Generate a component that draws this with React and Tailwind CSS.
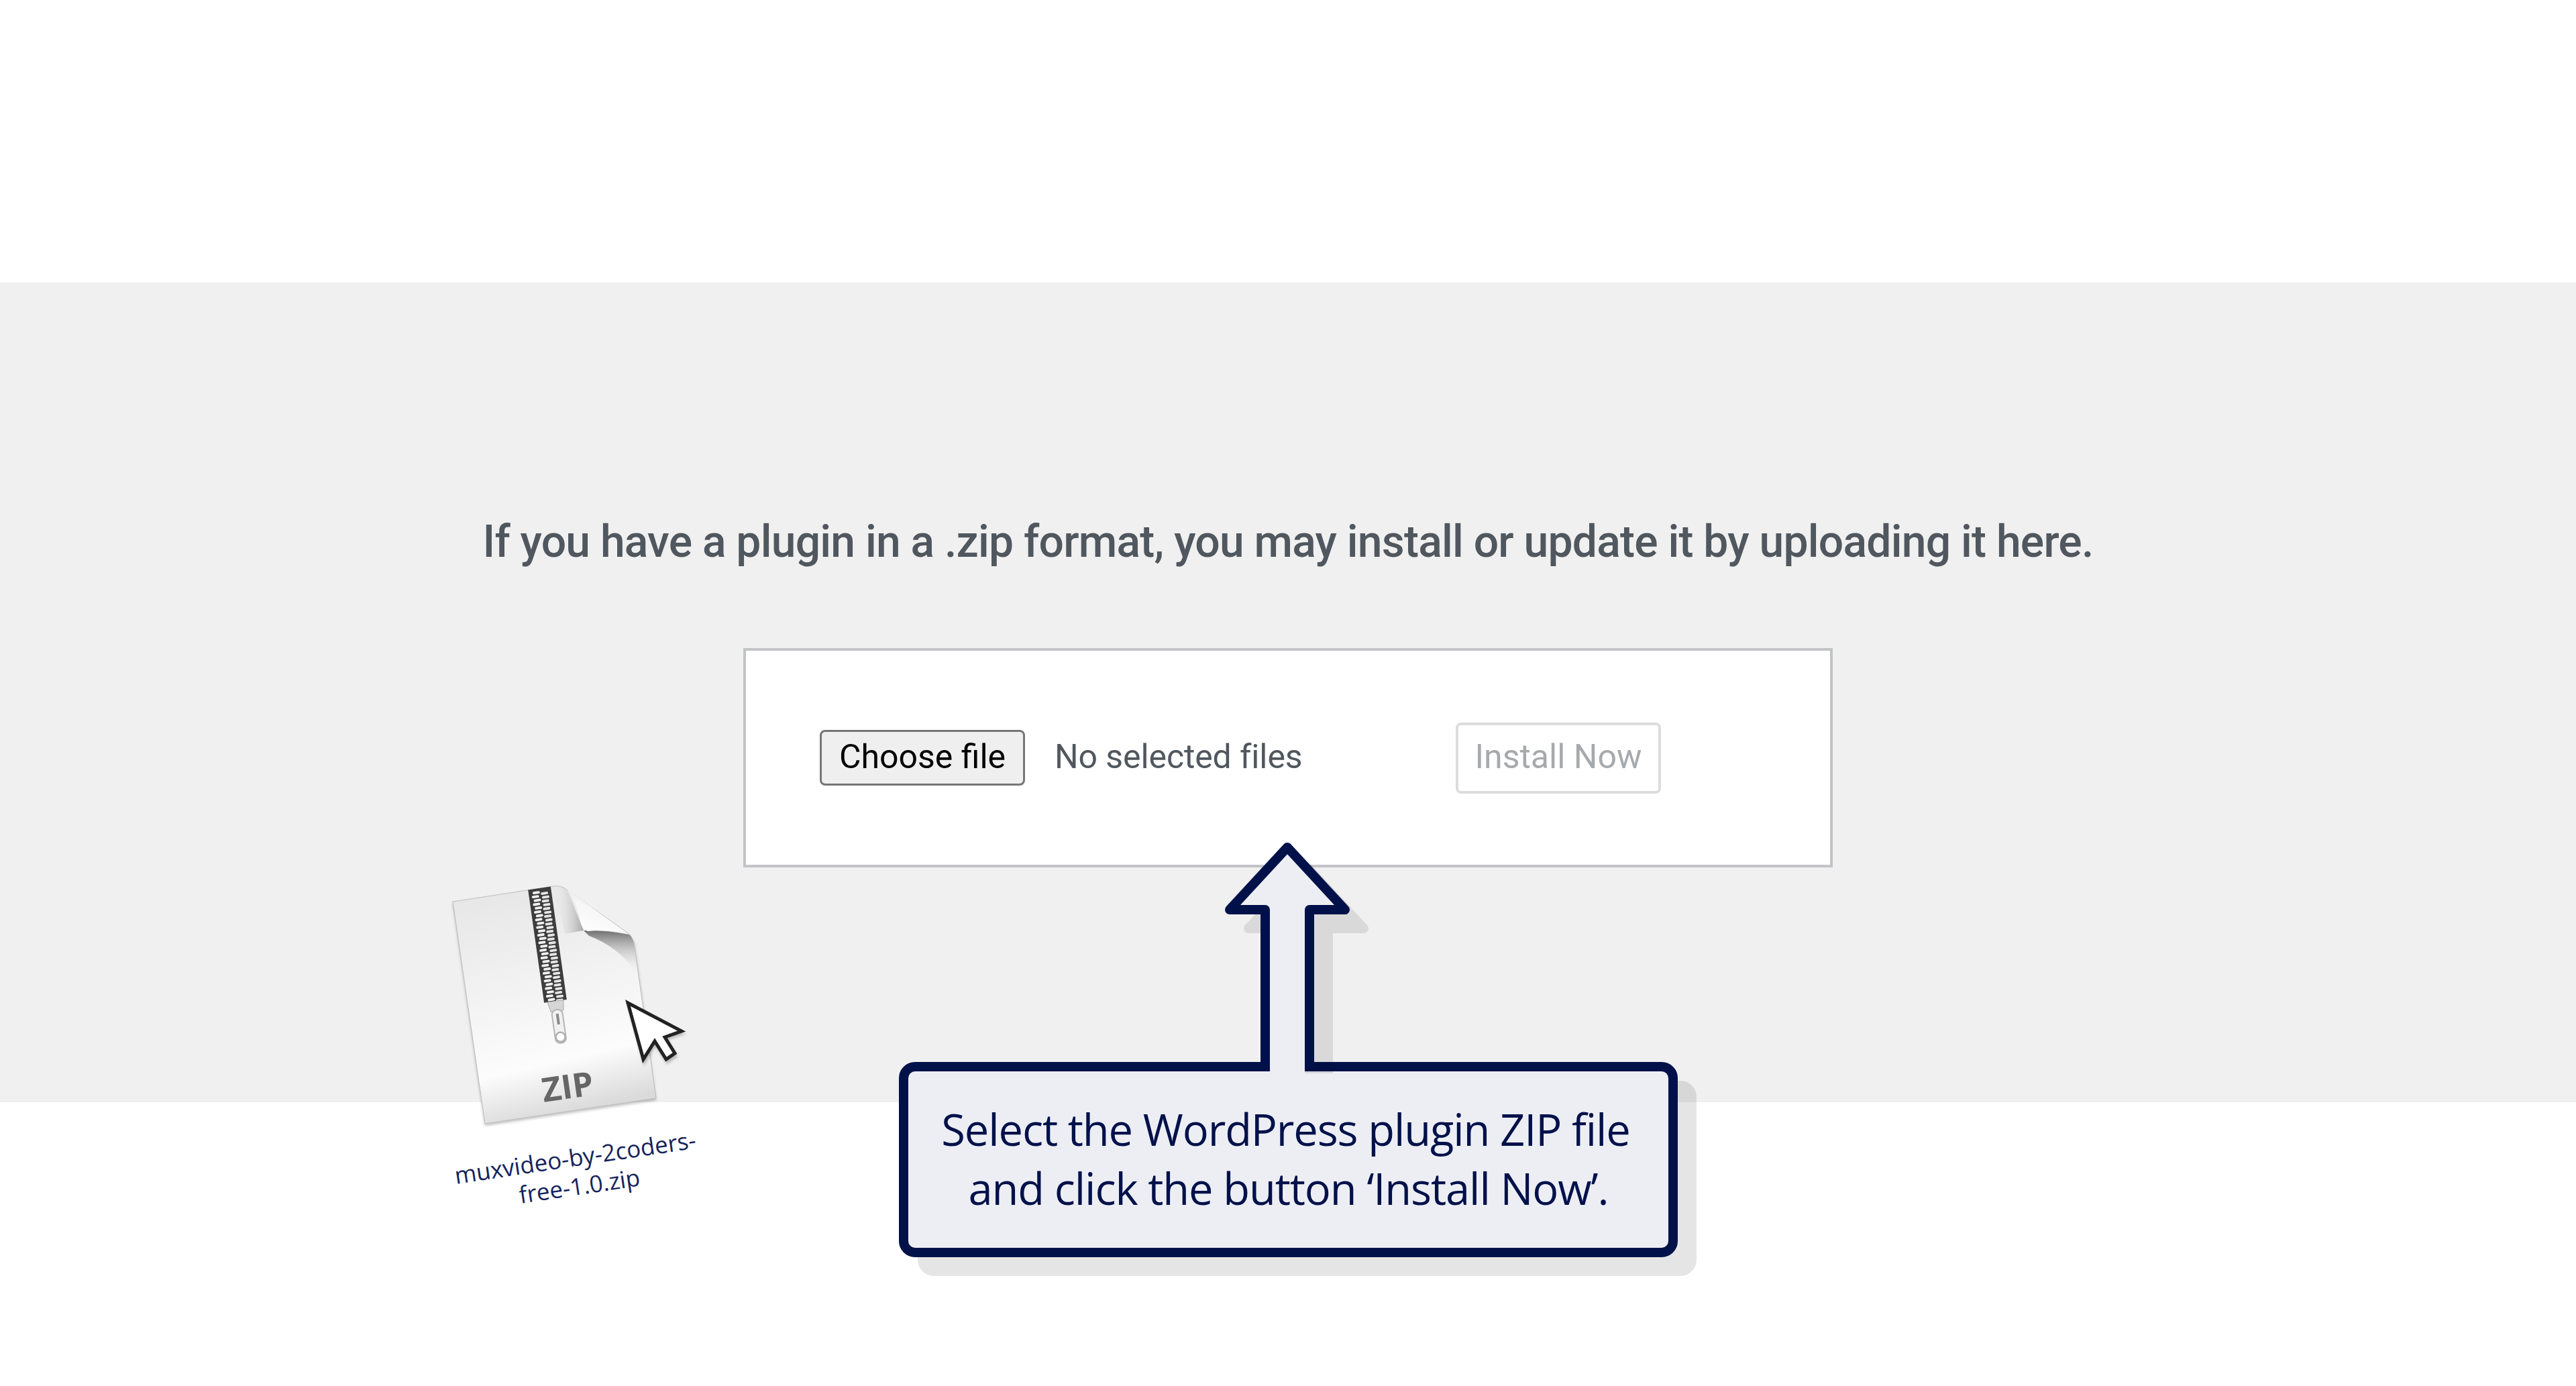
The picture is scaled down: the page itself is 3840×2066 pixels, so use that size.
const ZipperTeeth = () => {
  const rows = Array.from({ length: 29 }, (_, i) => i);
  return rows.map((i) => (
    <g key={i}>
      <rect x={i % 2 ? -13 : -11} y={4 + i * 5.75} width="11" height="3.8" rx="1.8" fill="#f2f2f2" />
      <rect x={i % 2 ? 2 : 1} y={6.6 + i * 5.75} width="11" height="3.8" rx="1.8" fill="#e6e6e6" />
    </g>
  ));
};

const ZipFile = () => (
  <svg width="460" height="440" viewBox="0 0 460 440" className="block">
    <defs>
      <linearGradient id="paper" x1="0.15" y1="0" x2="0.35" y2="1">
        <stop offset="0" stopColor="#e6e6e6" />
        <stop offset="0.4" stopColor="#f1f1f1" />
        <stop offset="0.78" stopColor="#fcfcfc" />
        <stop offset="1" stopColor="#dadada" />
      </linearGradient>
      <linearGradient id="foldShade" x1="0" y1="0" x2="0" y2="1">
        <stop offset="0" stopColor="#6f6f6f" />
        <stop offset="1" stopColor="#f2f2f2" stopOpacity="0" />
      </linearGradient>
      <linearGradient id="foldEdge" x1="0" y1="0" x2="1" y2="0">
        <stop offset="0" stopColor="#f0f0f0" stopOpacity="0" />
        <stop offset="1" stopColor="#8f8f8f" />
      </linearGradient>
      <linearGradient id="foldPaper" x1="0.2" y1="1" x2="0.7" y2="0">
        <stop offset="0" stopColor="#ffffff" />
        <stop offset="0.55" stopColor="#f6f6f6" />
        <stop offset="1" stopColor="#d6d6d6" />
      </linearGradient>
      <filter id="soft" x="-20%" y="-20%" width="140%" height="140%">
        <feGaussianBlur stdDeviation="2" />
      </filter>
    </defs>
    <path d="M55 66 L103 398 L358 360 L325 124 Z" fill="#000" opacity="0.25" filter="url(#soft)" />
    <path
      d="M55 64 L205 41 Q216 39 226 47 L315 110 Q323 116 325 126 L358 357 L103 395 Z"
      fill="url(#paper)"
      stroke="#bdbdbd"
      strokeWidth="1"
    />
    <path d="M205 41 Q216 39 226 47 L250 107 L222 112 Z" fill="url(#foldEdge)" opacity="0.75" />
    <path d="M250 107 Q285 106 318 113 Q324 119 325 128 L331 172 Q300 130 258 115 Z" fill="url(#foldShade)" />
    <path d="M224 44 Q240 66 244 88 Q247 108 258 108 Q285 104 316 112 L230 49 Z" fill="url(#foldPaper)" />
    <g transform="translate(184 44) rotate(-8.1)">
      <rect x="-17" y="0" width="34" height="170" fill="#3d3d3d" />
      <ZipperTeeth />
      <path d="M-12 170 L12 170 L10 185 L-9 185 Z" fill="#d6d6d6" stroke="#a8a8a8" strokeWidth="1" />
      <rect x="-8" y="183" width="16" height="50" rx="7" fill="#f1f1f1" stroke="#b5b5b5" strokeWidth="2" />
      <rect x="-2" y="189" width="4" height="16" fill="#8a8a8a" />
      <circle cx="0" cy="224" r="7" fill="#fff" stroke="#b0b0b0" strokeWidth="2.5" />
    </g>
    <text
      x="226"
      y="358"
      textAnchor="middle"
      transform="rotate(-8 224 340)"
      fontFamily="'Open Sans', sans-serif"
      fontWeight="700"
      fontSize="50"
      fill="#666666"
    >
      ZIP
    </text>
    <path
      d="M313 211 L400 257 L373 266 L388 291 L372 302 L355 275 L338 305 Z"
      fill="#000"
      opacity="0.25"
      filter="url(#soft)"
      transform="translate(2 4)"
    />
    <path
      d="M316 215 L396 257 L371 266 L386 290 L373 299 L356 272 L339 299 Z"
      fill="#fff"
      stroke="#222"
      strokeWidth="5"
      strokeLinejoin="miter"
    />
  </svg>
);

const ARROW = 'M60 340 V106 H7 L93 13 L179 106 H126 V340';

const Callout = () => (
  <div className="absolute left-[1340px] top-[1250px] w-[1161px]">
    <svg width="240" height="350" viewBox="0 0 240 350" className="absolute left-[486px] top-0 z-10">
      <path d={ARROW} transform="translate(28 28)" fill="#000" stroke="#000" strokeWidth="14" strokeLinejoin="round" opacity="0.09" />
      <path d={ARROW} fill="#edeef4" stroke="#00114a" strokeWidth="14" strokeLinejoin="round" />
      <rect x="67" y="330" width="52" height="20" fill="#edeef4" />
    </svg>
    <div className="mt-[333px] flex h-[291px] flex-col items-center justify-center rounded-[24px] border-[14px] border-[#00114a] bg-[#edeef4] pb-[4px] font-['Open_Sans',sans-serif] text-[65px] leading-[88px] tracking-[-1.1px] text-[#00114a] shadow-[28px_28px_0_rgba(0,0,0,0.1)]">
      <p className="pr-[8px]">Select the WordPress plugin ZIP file</p>
      <p>and click the button ‘Install Now’.</p>
    </div>
  </div>
);

export default function App() {
  return (
    <div className="relative flex h-screen flex-col bg-white font-['Roboto',sans-serif]">
      <div className="h-[421px]" />
      <section className="flex h-[1222px] flex-col items-center bg-[#f0f0f0]">
        <h1 className="mt-[350px] text-[66px] leading-[74px] font-medium tracking-[-0.77px] text-[#50575e]">
          If you have a plugin in a .zip format, you may install or update it by uploading it here.
        </h1>
        <div className="mt-[121px] flex h-[327px] w-[1624px] items-center border-[4px] border-[#c3c4c7] bg-white pl-[110px]">
          <button className="h-[83px] w-[306px] rounded-[8px] border-[3px] border-[#767676] bg-[#efefef] pb-[3px] text-[50px] leading-none text-black">
            Choose file
          </button>
          <span className="ml-[44px] w-[598px] pb-[3px] text-[50px] tracking-[-0.1px] text-[#50575e]">No selected files</span>
          <button className="h-[106px] w-[306px] rounded-[8px] border-[4px] border-[#dcdcde] bg-white pb-[3px] text-[50px] leading-none text-[#a7aaad]">
            Install Now
          </button>
        </div>
      </section>
      <div className="flex-1" />
      <Callout />
      <div className="absolute left-[620px] top-[1280px] w-[460px]">
        <ZipFile />
        <p className="mt-[-17px] ml-[21px] -rotate-[8.5deg] text-center font-['Open_Sans',sans-serif] text-[35px] leading-[43px] text-[#14245c]">
          muxvideo-by-2coders-
          <br />
          free-1.0.zip
        </p>
      </div>
    </div>
  );
}
